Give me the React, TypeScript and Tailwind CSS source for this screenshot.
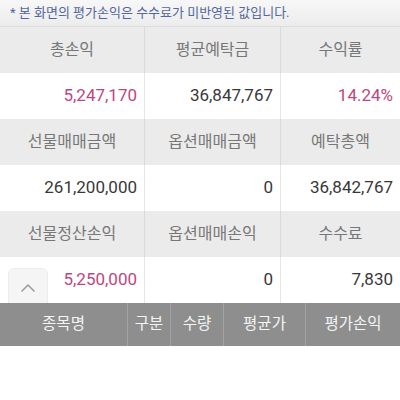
import { ChevronUp } from "lucide-react";

const FONT = { fontFamily: 'Roboto, "Noto Sans CJK KR", sans-serif' };

type Cell = { v: string; pink?: boolean };

const GRID: { heads: string[]; vals: Cell[] }[] = [
  {
    heads: ["총손익", "평균예탁금", "수익률"],
    vals: [{ v: "5,247,170", pink: true }, { v: "36,847,767" }, { v: "14.24%", pink: true }],
  },
  {
    heads: ["선물매매금액", "옵션매매금액", "예탁총액"],
    vals: [{ v: "261,200,000" }, { v: "0" }, { v: "36,842,767" }],
  },
  {
    heads: ["선물정산손익", "옵션매매손익", "수수료"],
    vals: [{ v: "5,250,000", pink: true }, { v: "0" }, { v: "7,830" }],
  },
];

const COLS = "grid-cols-[145px_136px_1fr]";

const TABLE_HEAD = [
  { label: "종목명", w: "w-[128px]" },
  { label: "구분", w: "w-[43px]" },
  { label: "수량", w: "w-[53px]" },
  { label: "평균가", w: "w-[82px]" },
  { label: "평가손익", w: "flex-1" },
];

export default function App() {
  return (
    <div className="relative w-[400px] h-[400px] bg-white overflow-hidden" style={FONT}>
      {/* notice */}
      <div className="h-[27px] flex items-center pl-[10px] bg-gradient-to-b from-[#f7f7f7] to-[#ececec] border-b border-[#dcdcdc] text-[13px] text-[#55679a]">
        * 본 화면의 평가손익은 수수료가 미반영된 값입니다.
      </div>

      {GRID.map((g, i) => (
        <div key={i}>
          <div className={`grid ${COLS} h-[46px] bg-[#ebebeb]`}>
            {g.heads.map((h, j) => (
              <div
                key={h}
                className={`flex items-center justify-center text-[16px] text-[#777] ${j < 2 ? "border-r border-[#dadada]" : ""}`}
              >
                {h}
              </div>
            ))}
          </div>
          <div className={`grid ${COLS} h-[46px] bg-white`}>
            {g.vals.map((c, j) => (
              <div
                key={j}
                className={`flex items-center justify-end pr-[7px] text-[17px] ${c.pink ? "text-[#c0467e]" : "text-[#383838]"} ${j < 2 ? "border-r border-[#e6e6e6]" : ""}`}
              >
                {c.v}
              </div>
            ))}
          </div>
        </div>
      ))}

      {/* bottom list header */}
      <div className="flex h-[43px] bg-[#8e8e8e] text-[15.5px] text-[#f4f4f4]">
        {TABLE_HEAD.map((t, i) => (
          <div
            key={t.label}
            className={`${t.w} flex items-center justify-center ${i < 4 ? "border-r border-[#a4a4a4]" : ""}`}
          >
            {t.label}
          </div>
        ))}
      </div>

      {/* scroll-to-top button */}
      <div className="absolute left-[8px] top-[268px] w-[40px] h-[35px] rounded-t-[6px] bg-[#f5f5f5] border border-b-0 border-[#ececec] flex items-center justify-center pt-[4px]">
        <ChevronUp size={24} strokeWidth={1.5} color="#9a9a9a" />
      </div>
    </div>
  );
}
